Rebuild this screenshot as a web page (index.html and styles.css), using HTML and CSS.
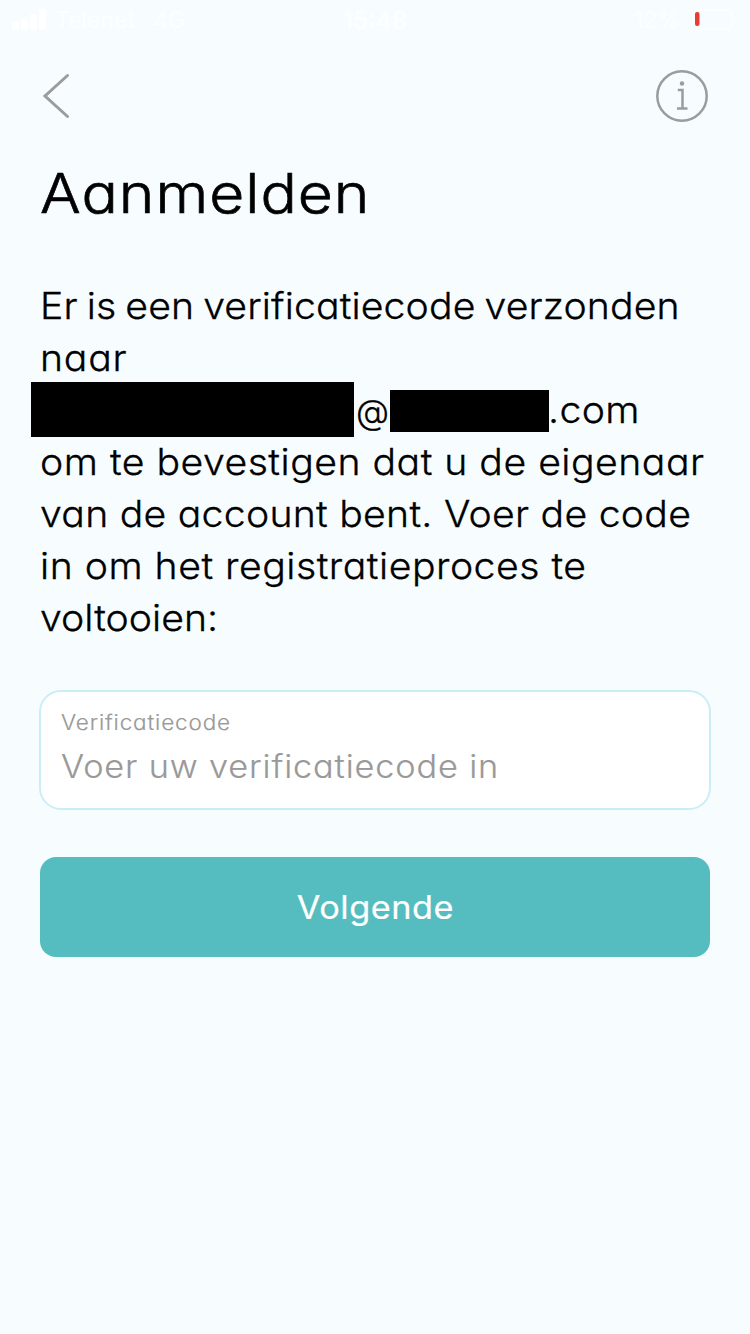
FILE: index.html
```html
<!DOCTYPE html>
<html lang="nl">
<head>
<meta charset="utf-8">
<title>Aanmelden</title>
<link rel="stylesheet" href="styles.css">
</head>
<body>
<header class="status">
  <div class="status-left">
    <svg class="signal" width="35" height="22" viewBox="0 0 35 22"><rect x="0" y="13" width="7" height="8" rx="2"/><rect x="9" y="10" width="7" height="11" rx="2"/><rect x="18" y="5" width="7" height="16" rx="2"/><rect x="27" y="0" width="7" height="21" rx="2"/></svg>
    <span class="carrier">Telenet</span><span>4G</span>
  </div>
  <div class="time">15:48</div>
  <div class="status-right">
    <span>12%</span>
    <svg width="46" height="22" viewBox="0 0 46 22"><rect x="1" y="1" width="39" height="19" rx="5" fill="none" stroke="#fafeff" stroke-width="2"/><path d="M43 7v7" stroke="#fafeff" stroke-width="2"/><rect x="3" y="3" width="4.500" height="14" rx="2" fill="#ea3c33"/></svg>
  </div>
</header>
<nav class="nav">
  <svg width="30" height="48" viewBox="0 0 30 48" class="icon"><path d="M26.500 3.500 4 24 26.500 44.500"/></svg>
  <svg width="54" height="54" viewBox="0 0 54 54" class="icon info"><circle cx="27" cy="27" r="24.700"/><path d="M22.800 21h4.700v18.500M22 39.500h10.500"/><circle class="dot" cx="27" cy="14.500" r="2.200"/></svg>
</nav>
<main class="content">
  <h1 class="title">Aanmelden</h1>
  <p class="message">
    <span class="line intro">Er is een verificatiecode verzonden</span>
    <span class="line recipient">naar</span>
    <span class="address"><span class="mask mask-name"></span><span class="at">@</span><span class="mask mask-domain"></span><span class="tld">.com</span></span>
    <span class="line confirm">om te bevestigen dat u de eigenaar</span>
    <span class="line account">van de account bent. Voer de code</span>
    <span class="line process">in om het registratieproces te</span>
    <span class="line finish">voltooien:</span>
  </p>
  <div class="field">
    <label class="label">Verificatiecode</label>
    <div class="placeholder">Voer uw verificatiecode in</div>
  </div>
  <button class="button"><span class="button-text">Volgende</span></button>
</main>
</body>
</html>
```
FILE: styles.css
```css
* { box-sizing: border-box; }
body {
  margin: 0;
  min-height: 1334px;
  background: #f7fdff;
  color: #000;
  font-family: Inter, "Open Sans", sans-serif;
  font-feature-settings: "cv11" 1;
}
.status {
  display: grid;
  grid-template-columns: 1fr auto 1fr;
  align-items: center;
  height: 40px;
  padding: 0 12px;
  color: #fcffff;
  font-size: 23px;
}
.status-left, .status-right { display: flex; align-items: center; }
.status-left { gap: 8px; }
.signal { fill: #fff; }
.carrier { margin-right: 10px; }
.status-right { justify-content: flex-end; gap: 12px; }
.time { font-size: 24px; font-weight: 600; }
.nav {
  display: flex;
  justify-content: space-between;
  align-items: center;
  height: 112px;
  padding: 0 41px;
}
.icon { fill: none; stroke: #9a9c9d; stroke-width: 3; stroke-linecap: round; stroke-linejoin: miter; }
.info { stroke-width: 2.5; stroke-linecap: butt; }
.icon .dot { fill: #9a9c9d; stroke: none; }
.content { padding: 0 40px; }
.title {
  margin: 0;
  height: 127px;
  font-size: 55px;
  font-weight: 300;
  line-height: 82px;
  letter-spacing: 0.9px;
  transform: scaleX(1.1);
  transform-origin: left;
  -webkit-text-stroke: 0.7px currentColor;
}
.message { margin: 0; font-size: 37px; line-height: 53px; font-weight: 300; -webkit-text-stroke: 0.3px currentColor; }
.line {
  display: block;
  height: 52px;
  white-space: nowrap;
  transform: scaleX(1.06);
  transform-origin: left;
}
.intro { letter-spacing: 0.1px; word-spacing: -2px; }
.recipient { letter-spacing: 0.7px; }
.confirm { letter-spacing: 0.44px; }
.account { letter-spacing: 0.22px; }
.process { letter-spacing: 0.45px; }
.finish { letter-spacing: 0; }
.address { display: flex; height: 52px; margin-left: -9px; }
.mask { background: #000; }
.mask-name { width: 323px; height: 55px; margin-top: -1px; }
.at { width: 36px; padding: 2px 0 0 2px; font-size: 34px; }
.mask-domain { width: 159px; height: 42px; margin-top: 7px; }
.tld { margin-left: -1px; letter-spacing: 0.3px; transform: scaleX(1.06); transform-origin: left; }
.field {
  height: 120px;
  margin: 47px -1px 0;
  padding: 16px 20px;
  border: 2px solid #caedf8;
  border-radius: 22px;
  background: #fff;
  color: #999;
  font-weight: 300;
}
.label, .placeholder {
  display: block;
  white-space: nowrap;
  transform: scaleX(1.07);
  transform-origin: left;
  -webkit-text-stroke: 0.2px currentColor;
}
.label { font-size: 21px; line-height: 30px; letter-spacing: 0.8px; }
.placeholder { font-size: 32px; line-height: 57px; letter-spacing: 0.82px; }
.button {
  display: block;
  width: 100%;
  height: 100px;
  margin-top: 47px;
  border: 0;
  border-radius: 16px;
  background: #55bdc0;
  color: #fff;
  font: 400 32px Inter, sans-serif;
}
.button-text {
  display: inline-block;
  letter-spacing: 0.5px;
  transform: scaleX(1.07);
  -webkit-text-stroke: 0.2px currentColor;
}
```
